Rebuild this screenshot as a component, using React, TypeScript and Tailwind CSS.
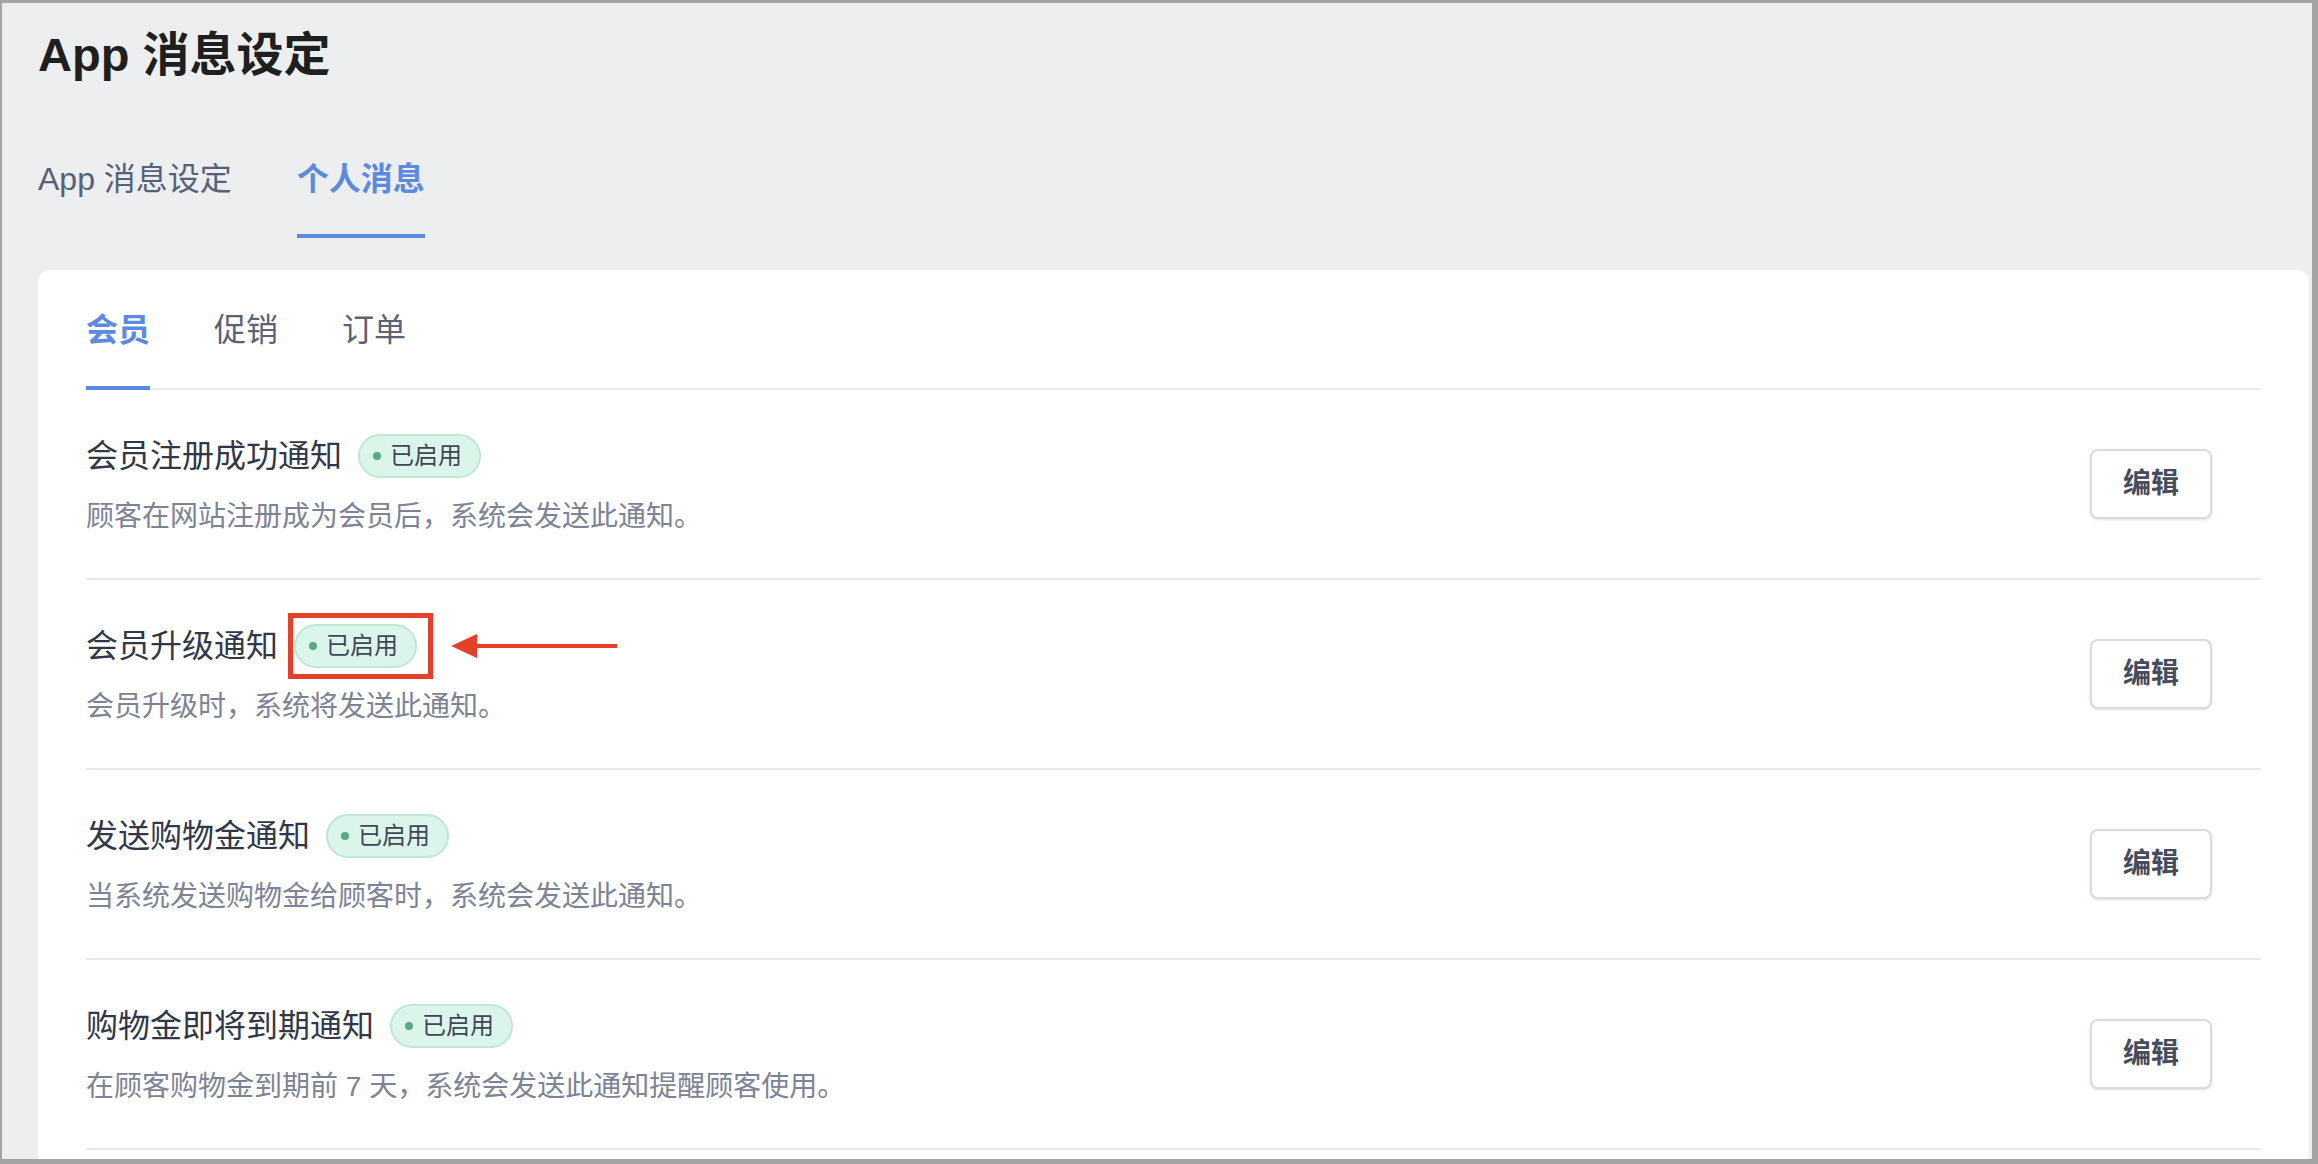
import React from 'react';

const font = { fontFamily: '"Liberation Sans", "Noto Sans CJK SC", sans-serif' };

interface Notice {
  title: string;
  desc: string;
  highlight?: boolean;
}

const notices: Notice[] = [
  { title: '会员注册成功通知', desc: '顾客在网站注册成为会员后，系统会发送此通知。' },
  { title: '会员升级通知', desc: '会员升级时，系统将发送此通知。', highlight: true },
  { title: '发送购物金通知', desc: '当系统发送购物金给顾客时，系统会发送此通知。' },
  { title: '购物金即将到期通知', desc: '在顾客购物金到期前 7 天，系统会发送此通知提醒顾客使用。' },
];

const StatusBadge: React.FC<{ highlight?: boolean }> = ({ highlight }) => (
  <span className="relative ml-[16px] inline-flex h-[44px] items-center gap-[9px] rounded-full border-2 border-[#bde8d3] bg-[#dcf5ea] pl-[13px] pr-[17px]">
    <span className="h-[8px] w-[8px] rounded-full bg-[#5aa886]" />
    <span className="text-[24px] leading-[32px] text-[#404656]">已启用</span>
    {highlight && (
      <>
        {/* annotation box + arrow */}
        <span className="pointer-events-none absolute -bottom-[13px] -left-[8px] -right-[18px] -top-[13px] border-[5px] border-[#e5402a]" />
        <svg
          className="absolute left-[155px] top-1/2 -translate-y-1/2"
          width="166"
          height="26"
          viewBox="0 0 166 26"
        >
          <line x1="22" y1="13" x2="166" y2="13" stroke="#e5402a" strokeWidth="4" />
          <polygon points="0,13 26,1 26,25" fill="#e5402a" />
        </svg>
      </>
    )}
  </span>
);

export default function App() {
  return (
    <div
      className="h-[1164px] w-[2318px] overflow-hidden bg-[#a3a3a3] pb-[5px] pl-[2px] pr-[6px] pt-[3px]"
      style={font}
    >
      <div className="flex h-full flex-col bg-[#edeef0] pl-[36px] pr-[3px] pt-[24px]">
        <h1 className="text-[47px] font-bold leading-[56px] text-[#1f1f1f]">App 消息设定</h1>

        {/* Page tabs */}
        <div className="mt-[74px] flex gap-[65px]">
          <button className="border-b-4 border-transparent pb-[33px] text-[32px] leading-[44px] text-[#56607a]">
            App 消息设定
          </button>
          <button className="border-b-4 border-[#5b8ae0] pb-[33px] text-[32px] font-bold leading-[44px] text-[#5b8ae0]">
            个人消息
          </button>
        </div>

        {/* Card */}
        <div className="mt-[32px] min-h-0 flex-1 overflow-hidden rounded-t-[12px] bg-white px-[48px] pt-[38px]">
          <div className="flex gap-16 border-b-2 border-[#e9eaee]">
            <button className="-mb-[2px] border-b-4 border-[#5b8ae0] pb-[34px] text-[32px] font-bold leading-[44px] text-[#5b8ae0]">
              会员
            </button>
            <button className="-mb-[2px] border-b-4 border-transparent pb-[34px] text-[32px] leading-[44px] text-[#5a6178]">
              促销
            </button>
            <button className="-mb-[2px] border-b-4 border-transparent pb-[34px] text-[32px] leading-[44px] text-[#5a6178]">
              订单
            </button>
          </div>

          {notices.map((n) => (
            <div
              key={n.title}
              className="flex items-center justify-between border-b-2 border-[#e6e9ef] pr-[49px]"
            >
              <div className="pb-[41px] pt-[42px]">
                <div className="flex h-[48px] items-center">
                  <span className="text-[32px] leading-[44px] text-[#30374a]">{n.title}</span>
                  <StatusBadge highlight={n.highlight} />
                </div>
                <p className="mt-[17px] text-[28px] leading-[40px] text-[#7c8397]">{n.desc}</p>
              </div>
              <button className="h-[70px] w-[122px] rounded-[8px] border-2 border-[#d5dce6] bg-white text-[28px] font-bold text-[#464c5c] shadow-sm">
                编辑
              </button>
            </div>
          ))}
        </div>
      </div>
    </div>
  );
}
